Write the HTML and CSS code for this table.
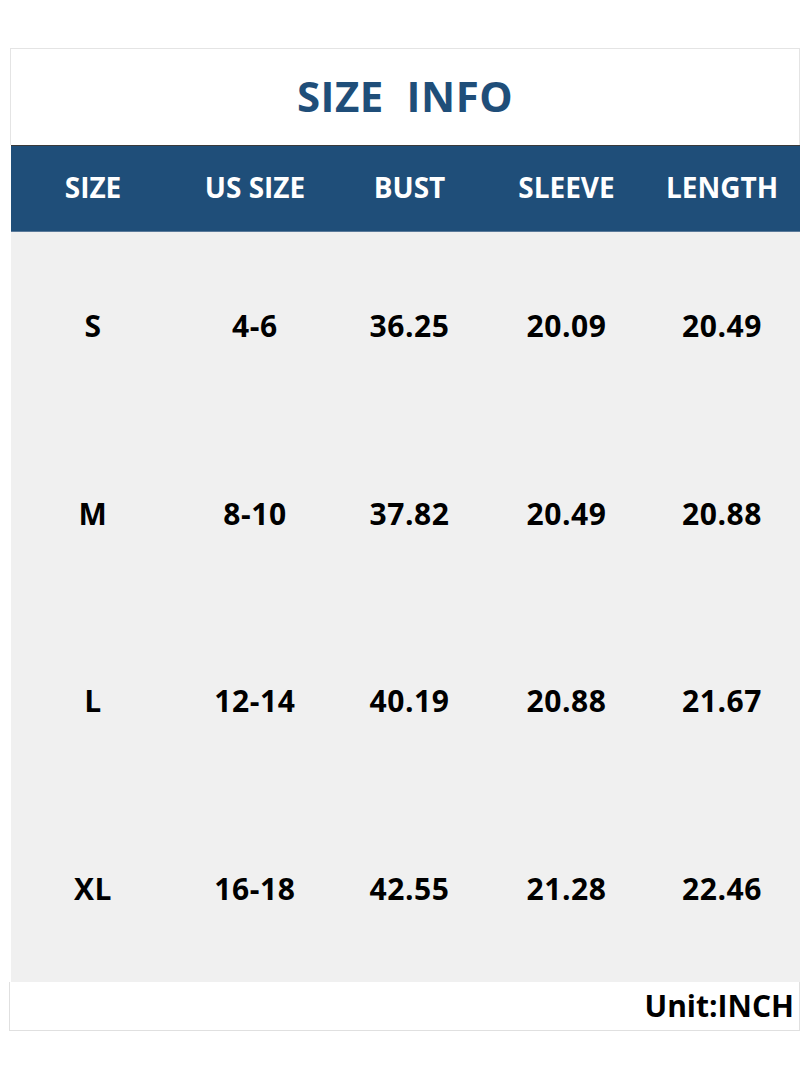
FILE: index.html
```html
<!DOCTYPE html>
<html>
<head>
<meta charset="utf-8">
<link rel="stylesheet" href="styles.css">
</head>
<body>
<div class="chart">
  <div class="title">SIZE  INFO</div>
  <div class="row head">
    <div>SIZE</div><div>US SIZE</div><div>BUST</div><div>SLEEVE</div><div>LENGTH</div>
  </div>
  <div class="body">
    <div class="row"><div>S</div><div>4-6</div><div>36.25</div><div>20.09</div><div>20.49</div></div>
    <div class="row"><div>M</div><div>8-10</div><div>37.82</div><div>20.49</div><div>20.88</div></div>
    <div class="row"><div>L</div><div>12-14</div><div>40.19</div><div>20.88</div><div>21.67</div></div>
    <div class="row"><div>XL</div><div>16-18</div><div>42.55</div><div>21.28</div><div>22.46</div></div>
  </div>
  <div class="footer">Unit:INCH</div>
</div>
</body>
</html>
```
FILE: styles.css
```css
html, body {
  margin: 0;
  padding: 0;
  background: #ffffff;
}
body {
  font-family: "Open Sans", "Noto Sans", sans-serif;
  font-weight: 700;
}
.chart {
  margin: 48px 0 0 10px;
  width: 790px;
}
.title {
  height: 97px;
  box-sizing: border-box;
  border: 1px solid #e4e4e4;
  border-bottom: none;
  display: flex;
  align-items: center;
  justify-content: center;
  white-space: pre;
  font-size: 42px;
  color: #1f4e79;
  letter-spacing: 0.5px;
  padding-bottom: 4px;
}
.row {
  display: grid;
  grid-template-columns: 164px 160px 149px 165px 146px;
  align-items: center;
  text-align: center;
}
.head {
  height: 87px;
  box-sizing: border-box;
  border-top: 1px solid #3a3a3a;
  border-bottom: 1px solid #5a7a9a;
  background: #1f4e79;
  color: #ffffff;
  font-size: 28px;
  margin-left: 1px;
  padding-bottom: 4px;
}
.body {
  background: #f0f0f0;
  margin-left: 1px;
}
.body .row {
  height: 187.5px;
  font-size: 30px;
  color: #000000;
  letter-spacing: 0.6px;
}
.footer {
  height: 49px;
  box-sizing: border-box;
  border: 1px solid #e0e0e0;
  border-top: none;
  display: flex;
  align-items: center;
  justify-content: flex-end;
  padding-right: 5px;
  font-size: 30px;
  color: #000000;
  margin-left: -1px;
  padding-bottom: 2px;
}
```
